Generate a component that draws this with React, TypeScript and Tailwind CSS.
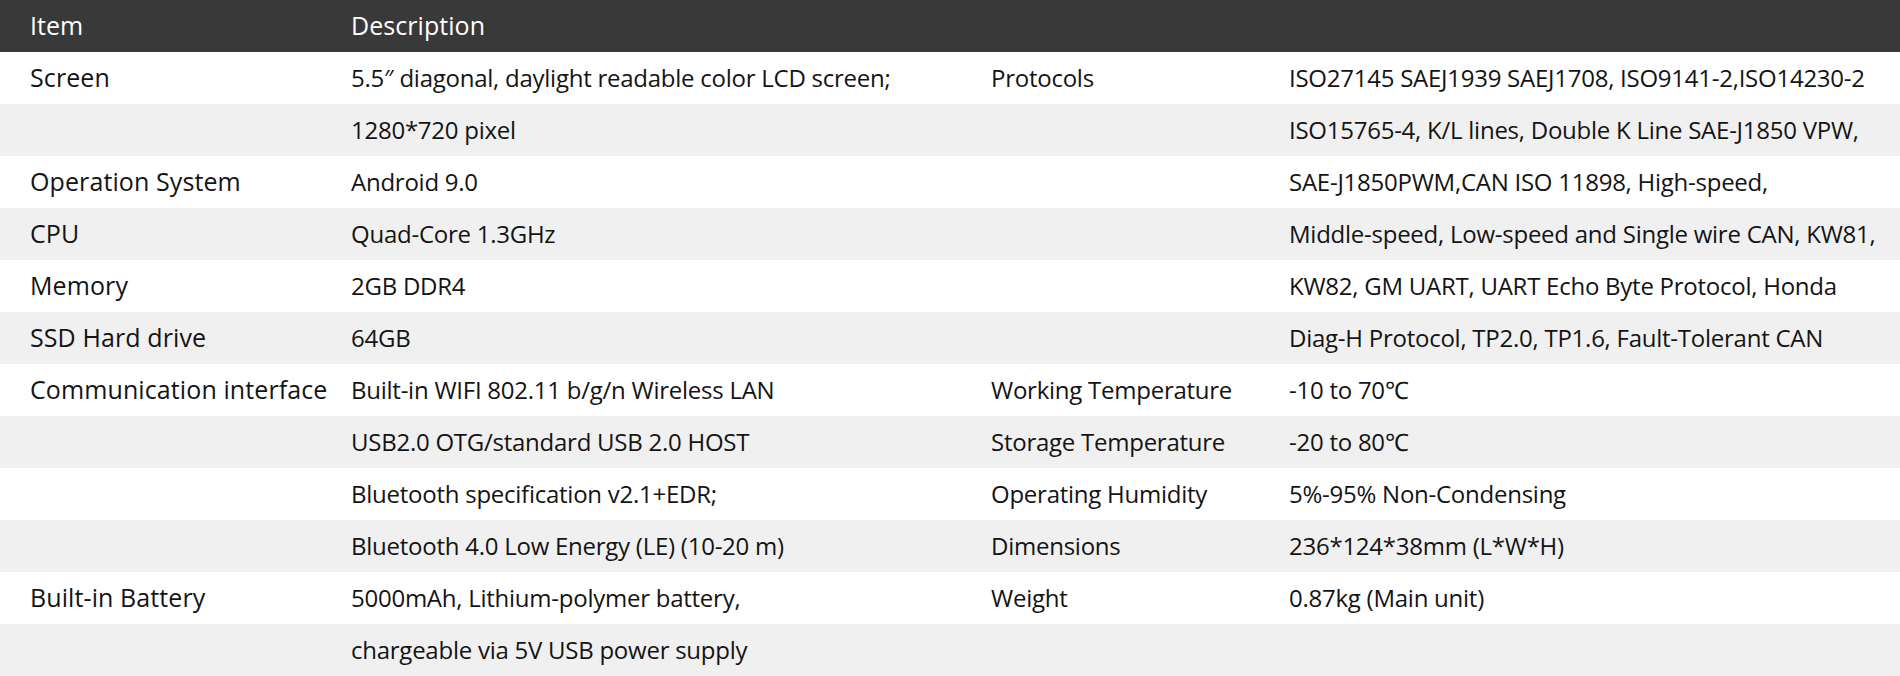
import React from "react";

const rows: [string, string, string, string][] = [
  ["Screen", "5.5″ diagonal, daylight readable color LCD screen;", "Protocols", "ISO27145 SAEJ1939 SAEJ1708, ISO9141-2,ISO14230-2"],
  ["", "1280*720 pixel", "", "ISO15765-4, K/L lines, Double K Line SAE-J1850 VPW,"],
  ["Operation System", "Android 9.0", "", "SAE-J1850PWM,CAN ISO 11898, High-speed,"],
  ["CPU", "Quad-Core 1.3GHz", "", "Middle-speed, Low-speed and Single wire CAN, KW81,"],
  ["Memory", "2GB DDR4", "", "KW82, GM UART, UART Echo Byte Protocol, Honda"],
  ["SSD Hard drive", "64GB", "", "Diag-H Protocol, TP2.0, TP1.6, Fault-Tolerant CAN"],
  ["Communication interface", "Built-in WIFI 802.11 b/g/n Wireless LAN", "Working Temperature", "-10 to 70℃"],
  ["", "USB2.0 OTG/standard USB 2.0 HOST", "Storage Temperature", "-20 to 80℃"],
  ["", "Bluetooth specification v2.1+EDR;", "Operating Humidity", "5%-95% Non-Condensing"],
  ["", "Bluetooth 4.0 Low Energy (LE) (10-20 m)", "Dimensions", "236*124*38mm (L*W*H)"],
  ["Built-in Battery", "5000mAh, Lithium-polymer battery,", "Weight", "0.87kg (Main unit)"],
  ["", "chargeable via 5V USB power supply", "", ""],
];

export default function App() {
  return (
    <div className="w-[1900px] bg-white text-[#141414] font-['Open_Sans',sans-serif] text-[24px] tracking-[-0.25px]">
      <div className="grid grid-cols-[351px_640px_298px_1fr] h-[52px] items-center bg-[#393939] text-white text-[25px] tracking-[0.05px]">
        <div className="pl-[30px]">Item</div>
        <div>Description</div>
        <div></div>
        <div></div>
      </div>
      {rows.map((r, i) => (
        <div
          key={i}
          className={`grid grid-cols-[351px_640px_298px_1fr] h-[52px] items-center ${i % 2 === 1 ? "bg-[#f0f0f0]" : "bg-white"}`}
        >
          <div className="pl-[30px] whitespace-nowrap text-[25px] tracking-[0.1px]">{r[0]}</div>
          <div className="whitespace-nowrap">{r[1]}</div>
          <div className="whitespace-nowrap">{r[2]}</div>
          <div className="whitespace-nowrap">{r[3]}</div>
        </div>
      ))}
    </div>
  );
}
